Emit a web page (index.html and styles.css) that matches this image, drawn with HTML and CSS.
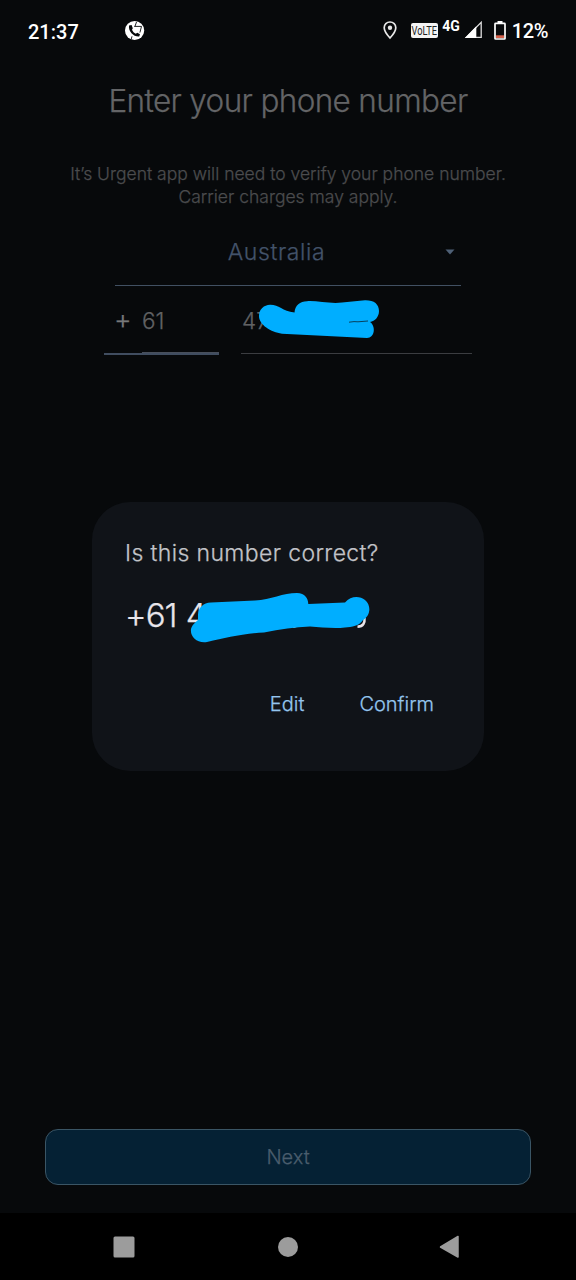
FILE: index.html
```html
<!DOCTYPE html>
<html lang="en">
<head>
<meta charset="utf-8">
<title>Enter your phone number</title>
<link rel="stylesheet" href="styles.css">
</head>
<body>
<div class="screen">
  <header class="status">
    <span class="clock">21:37</span>
    <svg class="call-icon" width="20" height="20" viewBox="0 0 20 20">
      <circle cx="9.600" cy="9.500" r="9.600" fill="#fff"/>
      <path d="M4 4.600 6.600 4 7.800 7.200 7 8.800C7.800 10.800 9 12 10.800 12.700L12.300 11.700 15 13.200 14.200 15.600C8.600 16 3.200 10.800 4 4.600Z" fill="#07090b"/>
      <path d="M9.200 5.400h7.300l-1.600 6.200M11.500 1 10 5.200M7 15.300l-.8 3" fill="none" stroke="#07090b" stroke-width=".9"/>
    </svg>
    <div class="status-right">
      <svg class="pin" width="14" height="18" viewBox="0 0 14 18">
        <path d="M7 1C3.700 1 1.200 3.500 1.200 6.700 1.200 10.600 7 17 7 17s5.800-6.400 5.800-10.300C12.800 3.500 10.300 1 7 1Z" fill="none" stroke="#e8e8e8" stroke-width="1.700"/>
        <circle cx="7" cy="6.700" r="2.200" fill="#e8e8e8"/>
      </svg>
      <span class="volte"><span class="volte-text">VoLTE</span></span>
      <span class="net">4G</span>
      <svg class="signal" width="19" height="18" viewBox="0 0 19 18">
        <path d="M17.200 1.400V16.300H2.400Z" fill="none" stroke="#ddd" stroke-width="1.300"/>
        <path d="M12.300 5.300V17H.8Z" fill="#fff"/>
      </svg>
      <svg class="battery" width="12" height="19" viewBox="0 0 12 19">
        <path d="M3.500 0h5v2h-5z" fill="#fff"/>
        <rect x="1" y="2.400" width="10" height="15.600" rx=".6" fill="none" stroke="#fff" stroke-width="1.700"/>
        <path d="M2 14.300h8V17H2z" fill="#d4604a"/>
      </svg>
      <span class="percent">12%</span>
    </div>
  </header>

  <main class="page">
    <h1 class="title">Enter your phone number</h1>
    <p class="note">It’s Urgent app will need to verify your phone number.<br>Carrier charges may apply.</p>
    <div class="country">
      <span class="country-name">Australia</span>
      <svg class="caret" width="10" height="6" viewBox="0 0 10 6"><path d="M.5.500h9L5 5.500Z" fill="#4e6076"/></svg>
    </div>
    <div class="fields">
      <div class="code"><span class="plus">+</span><span class="digits">61</span></div>
      <div class="number">
        <span class="digits-num">47</span>
        <svg class="mask" width="125" height="42" viewBox="0 0 125 42">
          <path d="M13 4.700C22 4.500 25 11 37.500 12.500C38 5 43 1.500 50 1.200C60 .5 73 4 85 2.500L108 .2C117 0 122 4 122 11C122 17 118 21 113 22C119 26 118 38 110 38L25 33.700C14 32 2 25 2 16C2 9 7 5 13 4.700Z" fill="#00aeff"/>
          <path d="M92 22.200l5-.6 4 .2 10-.8" fill="none" stroke="#08344a" stroke-width=".9"/>
        </svg>
      </div>
    </div>
    <button class="next">Next</button>
  </main>

  <section class="dialog">
    <h2 class="ask">Is this number correct?</h2>
    <div class="phone">
      <span class="phone-text">+61</span><span class="phone-four">4</span>
      <svg class="mask-big" width="184" height="56" viewBox="0 0 184 56">
        <path d="M175.500 32c.5 4.500-1 8.500-7 8.800M110 39l-6 1.800" fill="none" stroke="#e8e3e8" stroke-width="2.500"/>
        <path d="M9 28.500C10 21 14 17 22 16.500L66 14.500C82 13.500 94 7 108 7C116 7.500 119 12 119.300 18L156 16.500C162 9.500 171 10 176 14C183 20 181 30 174 34C170 40 163 41 156 41.500C144 43 132 41 121 40.500C106 41 91 43.500 75 46.500C51 48 37 52 18 56C8 57.500 1 51 2 43C3.500 38 7 36 9 34Z" fill="#00aeff"/>
      </svg>
    </div>
    <div class="actions"><span class="edit">Edit</span><span class="confirm">Confirm</span></div>
  </section>

  <nav class="nav">
    <svg width="22" height="22" viewBox="0 0 22 22"><rect x=".5" y=".5" width="21" height="21" rx="1.500" fill="#9c9c9c"/></svg>
    <svg width="22" height="22" viewBox="0 0 22 22"><circle cx="12" cy="11" r="10" fill="#9c9c9c"/></svg>
    <svg width="22" height="24" viewBox="0 0 22 24"><path d="M19 1.500V22L1.500 12Z" fill="#9c9c9c" stroke="#9c9c9c" stroke-width="1.500" stroke-linejoin="round"/></svg>
  </nav>
</div>
</body>
</html>
```
FILE: styles.css
```css
* { box-sizing: border-box; }
body { margin: 0; background: #07090b; font-family: Inter, "Liberation Sans", sans-serif; font-weight: 300; }
svg { display: block; flex: none; overflow: visible; }
.screen { position: relative; width: 576px; height: 1280px; display: flex; flex-direction: column; overflow: hidden; background: #07090b; }

.status { height: 60px; flex: none; padding: 0 28px; display: flex; align-items: center; font-family: Roboto, sans-serif; font-weight: 500; font-size: 20px; color: #fff; }
.clock { width: 97px; padding-top: 3px; }
.call-icon { margin-top: 1px; }
.status-right { margin-left: auto; display: flex; align-items: center; }
.pin { margin-right: 14px; }
.volte { width: 27px; height: 15px; margin: 1px 4px 0 0; border-radius: 2px; background: #f4f4f4; color: #222; display: flex; align-items: center; justify-content: center; }
.volte-text { font-size: 12.5px; line-height: 15px; font-weight: 400; transform: scaleX(.74); }
.net { font-size: 14px; line-height: 16px; font-weight: 700; margin: 0 4px 9px 0; }
.signal { margin-right: 11px; }
.battery { margin-right: 6px; }
.percent { padding-top: 2px; letter-spacing: -.4px; }

.page, .dialog { -webkit-text-stroke: .25px currentColor; }
.page { flex: 1; padding: 20px 45px 28px; display: flex; flex-direction: column; }
.title { margin: 0; text-align: center; font-size: 31.5px; line-height: 41px; font-weight: 300; letter-spacing: -.65px; color: #636466; white-space: nowrap; }
.note { margin: 41px -10px 0; text-align: center; font-size: 17.5px; line-height: 23px; color: #4b4c4e; white-space: nowrap; }
.country { width: 346px; height: 53px; margin: 25px 0 0 70px; border-bottom: 1px solid #415062; display: flex; align-items: center; padding: 0 6px 14px 0; color: #43536a; }
.country-name { flex: 1; padding-right: 7px; text-align: center; font-size: 23px; line-height: 30px; letter-spacing: .6px; }
.fields { display: flex; gap: 22px; margin-left: 59px; height: 69px; color: #606163; font-size: 22.5px; }
.code { width: 115px; height: 69px; border-bottom: 2px solid #404d60; display: flex; padding: 21px 0 0 10px; line-height: 28px; background: linear-gradient(#484f5b, #484f5b) 38px 100% / 77px 1px no-repeat; }
.plus { width: 28px; font-size: 27px; line-height: 25px; color: #77787a; }
.number { position: relative; width: 231px; height: 68px; border-bottom: 1px solid #3b3d41; padding: 21px 0 0 1px; line-height: 28px; }
.mask { position: absolute; left: 16px; top: 14px; }
.next { margin-top: auto; height: 56px; border: 1.5px solid #3a5565; border-radius: 13px; background: #052134; color: #4a5d6d; font: 300 20px/28px Inter, sans-serif; -webkit-text-stroke: .25px currentColor; padding: 0; }

.dialog { position: absolute; left: 92px; top: 502px; width: 392px; height: 269px; border-radius: 38px; background: #101318; padding: 36px 34px 36px 33px; display: flex; flex-direction: column; }
.ask { margin: 0; font-size: 23px; line-height: 30px; font-weight: 300; letter-spacing: .38px; color: #c2c3c8; white-space: nowrap; }
.phone { position: relative; display: flex; margin-top: 27px; height: 40px; font-size: 33px; line-height: 40px; color: #e9e5ea; }
.phone-text { letter-spacing: -.9px; }
.phone-four { margin-left: 9px; }
.mask-big { position: absolute; left: 64px; top: -9px; }
.actions { margin-top: 55px; padding-right: 16px; display: flex; justify-content: flex-end; gap: 55px; font-size: 20px; line-height: 28px; color: #94c5ee; }

.nav { height: 67px; flex: none; background: #000; display: flex; justify-content: space-between; align-items: center; padding: 0 115px 0 113px; }
```
